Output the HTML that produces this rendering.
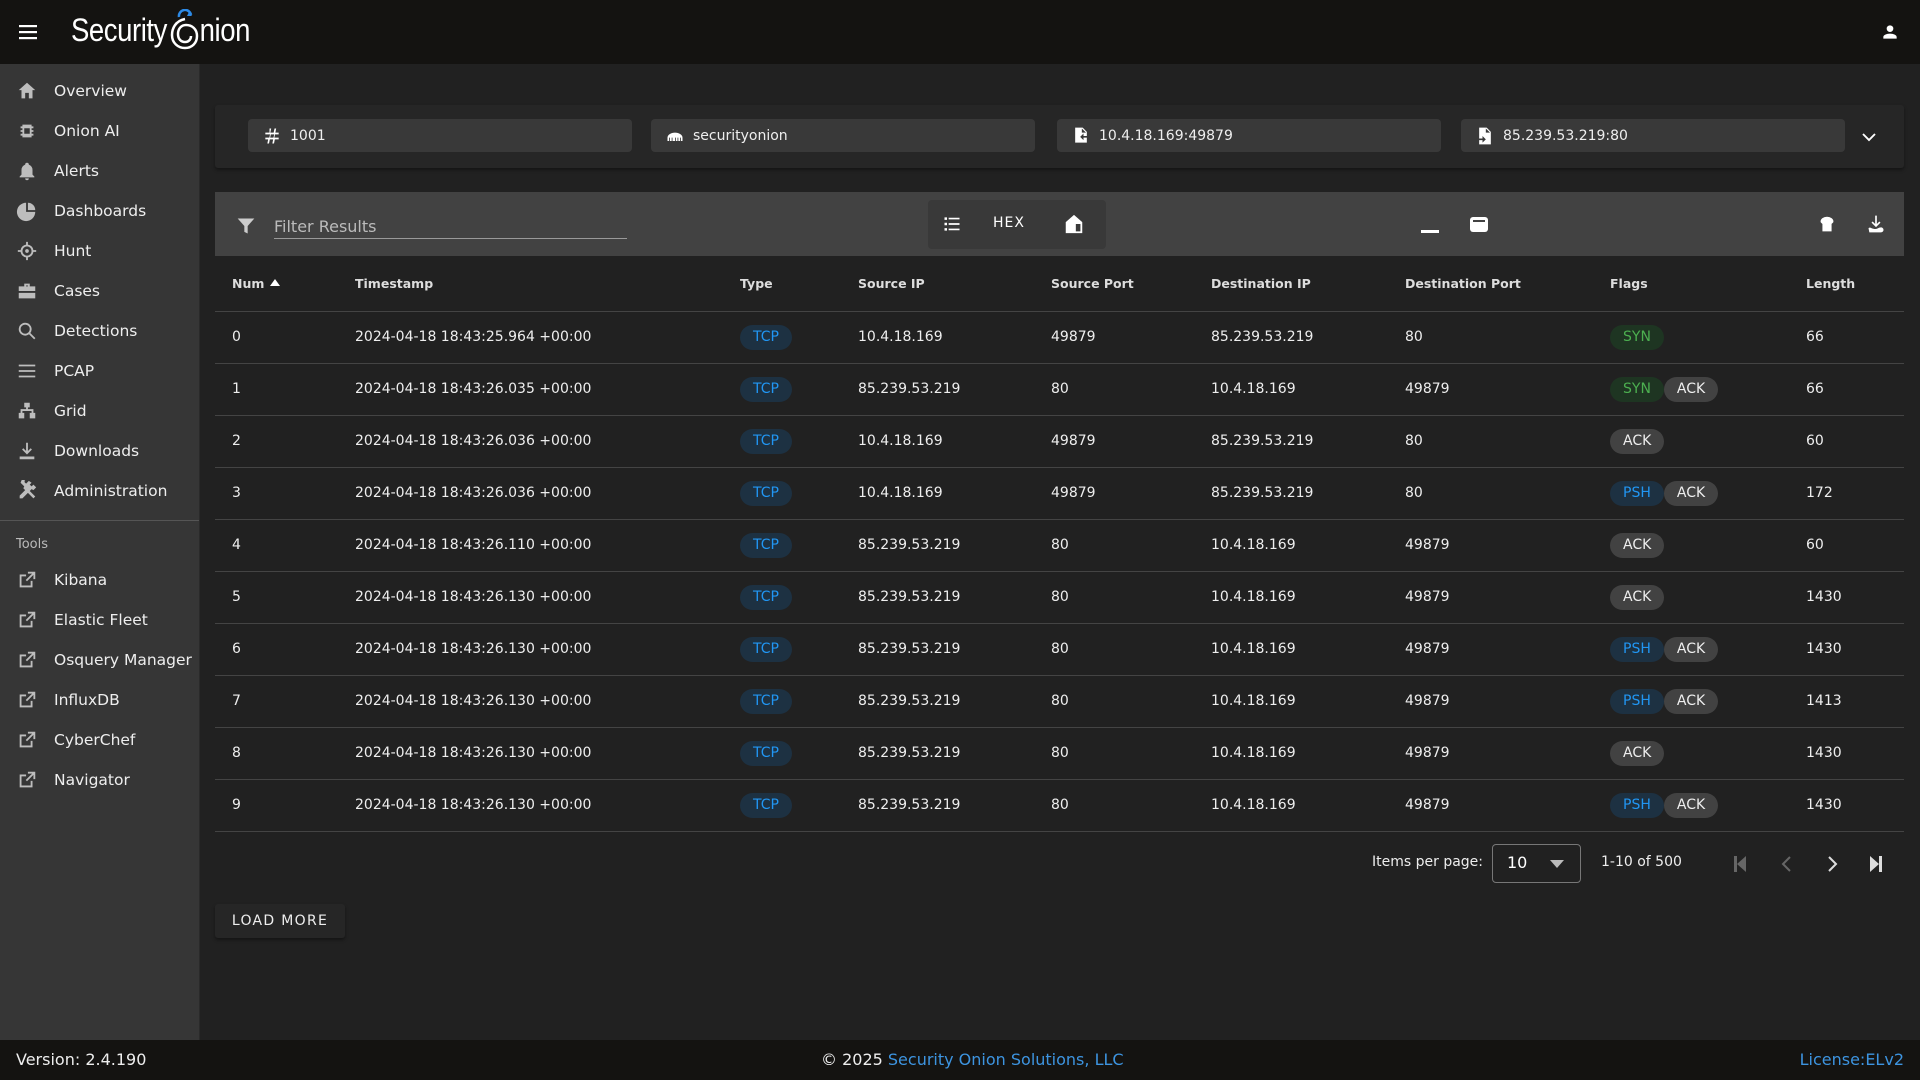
<!DOCTYPE html>
<html><head><meta charset="utf-8"><style>
*{box-sizing:border-box;margin:0;padding:0}
body{width:1920px;height:1080px;background:#212121;font-family:"DejaVu Sans","Liberation Sans",sans-serif;color:#fff;position:relative;overflow:hidden}
.abs{position:absolute}
#top{left:0;top:0;width:1920px;height:64px;background:#141311}
#side{left:0;top:64px;width:200px;height:976px;background:#363636;border-right:1px solid #2a2a2a}
.nav{position:absolute;left:0;width:200px;height:40px;font-size:15.5px;color:#eee;display:flex;align-items:center}
.nav svg{position:absolute;left:16px;width:22px;height:22px;fill:#bdbdbd}
.nav span{position:absolute;left:54px}
#foot{left:0;top:1040px;width:1920px;height:40px;background:#141311;font-size:16px;color:#eee}
.card{background:#262626;box-shadow:0 2px 3px rgba(0,0,0,.4);border-radius:3px}
.chipin{position:absolute;top:119px;height:33px;width:384px;background:#393939;border-radius:4px;font-size:14px;color:#eee;display:flex;align-items:center}
.chipin svg{position:absolute;left:14px;width:20px;height:20px;fill:#fff}
.chipin span{position:absolute;left:42px}
table{border-collapse:collapse;position:absolute;left:215px;top:256px;width:1689px;font-size:14px;table-layout:fixed}
th{height:55px;text-align:left;font-size:12.5px;font-weight:bold;color:#ddd;border-bottom:1px solid #444;padding:0}
td{height:52px;border-bottom:1px solid #444;color:#eee;padding:0}
.c{display:inline-block;height:25px;line-height:25px;padding:0 13px;border-radius:13px;font-size:14px}
.tcp{background:#1d3142;color:#2196f3}
.syn{background:#1e3522;color:#4caf50}
.ack{background:#424242;color:#eee}
.psh{background:#1d3142;color:#2196f3}
</style></head><body>
<div id="top" class="abs">
  <svg class="abs" style="left:19px;top:24px" width="18" height="16" viewBox="0 0 18 16"><rect y="1" width="18" height="2.2" fill="#fff"/><rect y="7" width="18" height="2.2" fill="#fff"/><rect y="13" width="18" height="2.2" fill="#fff"/></svg>
  <div class="abs" style="left:71px;top:12px;font-family:'Liberation Sans',sans-serif;font-size:32px;color:#fff;transform:scaleX(.86);transform-origin:left;letter-spacing:-.5px;white-space:nowrap">Security<span style="display:inline-block;width:38px"></span>nion</div>
  <svg class="abs" style="left:168px;top:9px" width="32" height="42" viewBox="0 0 30 42"><path d="M10 8 A6 6 0 0 1 22 6" stroke="#2d8ae6" stroke-width="2.5" fill="none"/><path d="M20 3 l3 4 l-5 0z" fill="#2d8ae6"/><path d="M16 10 C6 12 3 20 3 26 C3 34 9 39 16 39 C23 39 28 34 28 27 C28 20 23 16 17 16 C12 16 9 20 9 25 C9 30 12 33 16 33 C20 33 22 30 22 27" stroke="#fff" stroke-width="2.5" fill="none"/></svg>
  <svg class="abs" style="left:1880px;top:22px" width="20" height="20" viewBox="0 0 24 24"><path fill="#fff" d="M12 4a4 4 0 1 1 0 8 4 4 0 0 1 0-8zm0 10c4.4 0 8 1.8 8 4v2H4v-2c0-2.2 3.6-4 8-4z"/></svg>
</div>
<div id="side" class="abs">
  <div class="nav" style="top:7px"><svg viewBox="0 0 24 24"><path d="M12 3l9 8h-3v9h-4v-6h-4v6H6v-9H3z"/></svg><span>Overview</span></div>
  <div class="nav" style="top:47px"><svg viewBox="0 0 24 24"><path d="M7 5h10v2h2v2h-2v2h2v2h-2v2h2v2h-2v2H7v-2H5v-2h2v-2H5v-2h2V9H5V7h2zM9 9v6h6V9z"/></svg><span>Onion AI</span></div>
  <div class="nav" style="top:87px"><svg viewBox="0 0 24 24"><path d="M12 3a2 2 0 0 1 2 2 6 6 0 0 1 4 6v5l2 2v1H4v-1l2-2v-5a6 6 0 0 1 4-6 2 2 0 0 1 2-2zm-2 17h4a2 2 0 0 1-4 0z"/></svg><span>Alerts</span></div>
  <div class="nav" style="top:127px"><svg viewBox="0 0 24 24"><path d="M11 3v10h10A10 10 0 1 1 11 3zm2 0a8 8 0 0 1 8 8h-8z"/></svg><span>Dashboards</span></div>
  <div class="nav" style="top:167px"><svg viewBox="0 0 24 24"><path d="M11 2h2v3a7 7 0 0 1 6 6h3v2h-3a7 7 0 0 1-6 6v3h-2v-3a7 7 0 0 1-6-6H2v-2h3a7 7 0 0 1 6-6zm1 5a5 5 0 1 0 0 10 5 5 0 0 0 0-10zm0 3a2 2 0 1 1 0 4 2 2 0 0 1 0-4z"/></svg><span>Hunt</span></div>
  <div class="nav" style="top:207px"><svg viewBox="0 0 24 24"><path d="M9 4h6v3h6v5H3V7h6zm2 2v1h2V6zM3 14h18v6H3z"/></svg><span>Cases</span></div>
  <div class="nav" style="top:247px"><svg viewBox="0 0 24 24"><path d="M10 3a7 7 0 0 1 5.6 11.2l5.6 5.6-1.4 1.4-5.6-5.6A7 7 0 1 1 10 3zm0 2a5 5 0 1 0 0 10 5 5 0 0 0 0-10z"/></svg><span>Detections</span></div>
  <div class="nav" style="top:287px"><svg viewBox="0 0 24 24"><path d="M3 5h18v2H3zm0 6h18v2H3zm0 6h18v2H3z"/></svg><span>PCAP</span></div>
  <div class="nav" style="top:327px"><svg viewBox="0 0 24 24"><path d="M9 3h6v5h-2v2h6v4h2v6h-6v-6h2v-2H7v2h2v6H3v-6h2v-4h6V8H9z"/></svg><span>Grid</span></div>
  <div class="nav" style="top:367px"><svg viewBox="0 0 24 24"><path d="M11 3h2v9l3-3 1.4 1.4L12 15.8 6.6 10.4 8 9l3 3zM4 18h16v3H4z"/></svg><span>Downloads</span></div>
  <div class="nav" style="top:407px"><svg viewBox="0 0 24 24"><path d="M5 3l4 4-1 2 2 2-6 6v3h3l6-6 6 6 2-2-6-6 2-2 2 1 3-3-3-3-2 2-2-2 2-2-3-2-3 3-2-2 1-1-3-3z"/></svg><span>Administration</span></div>
  <div class="abs" style="left:0;top:456px;width:199px;height:1px;background:#555"></div>
  <div class="abs" style="left:16px;top:473px;font-size:13px;color:#bbb">Tools</div>
  <div class="nav" style="top:496px"><svg viewBox="0 0 24 24"><path d="M4 6h7v2H6v10h10v-5h2v7H4zm9-3h8v8h-2V6.4l-7 7L10.6 12l7-7H13z"/></svg><span>Kibana</span></div>
  <div class="nav" style="top:536px"><svg viewBox="0 0 24 24"><path d="M4 6h7v2H6v10h10v-5h2v7H4zm9-3h8v8h-2V6.4l-7 7L10.6 12l7-7H13z"/></svg><span>Elastic Fleet</span></div>
  <div class="nav" style="top:576px"><svg viewBox="0 0 24 24"><path d="M4 6h7v2H6v10h10v-5h2v7H4zm9-3h8v8h-2V6.4l-7 7L10.6 12l7-7H13z"/></svg><span>Osquery Manager</span></div>
  <div class="nav" style="top:616px"><svg viewBox="0 0 24 24"><path d="M4 6h7v2H6v10h10v-5h2v7H4zm9-3h8v8h-2V6.4l-7 7L10.6 12l7-7H13z"/></svg><span>InfluxDB</span></div>
  <div class="nav" style="top:656px"><svg viewBox="0 0 24 24"><path d="M4 6h7v2H6v10h10v-5h2v7H4zm9-3h8v8h-2V6.4l-7 7L10.6 12l7-7H13z"/></svg><span>CyberChef</span></div>
  <div class="nav" style="top:696px"><svg viewBox="0 0 24 24"><path d="M4 6h7v2H6v10h10v-5h2v7H4zm9-3h8v8h-2V6.4l-7 7L10.6 12l7-7H13z"/></svg><span>Navigator</span></div>
</div>

<div class="abs card" style="left:215px;top:105px;width:1689px;height:63px"></div>
<div class="chipin" style="left:248px"><svg viewBox="0 0 24 24"><path d="M9 3h2l-1 5h4l1-5h2l-1 5h4v2h-4.4l-.8 4H20v2h-4.6l-1 5h-2l1-5h-4l-1 5h-2l1-5H4v-2h4.8l.8-4H4V8h5zm1.6 7l-.8 4h4l.8-4z"/></svg><span>1001</span></div>
<div class="chipin" style="left:651px"><svg viewBox="0 0 24 24"><path d="M3 18v-4a9 6 0 0 1 18 0v4h-2v-4h-1v4h-2v-4h-1v4h-2v-4h-1v4H9v-4H8v4H6v-4H5v4z"/></svg><span>securityonion</span></div>
<div class="chipin" style="left:1057px"><svg viewBox="0 0 24 24"><path d="M5 2h9l5 5v5h-4v-3l-4 4 4 4v-3h4v6H5zm8 1v5h5z"/></svg><span>10.4.18.169:49879</span></div>
<div class="chipin" style="left:1461px"><svg viewBox="0 0 24 24"><path d="M5 2h9l5 5v15H5v-5h4v3l4-4-4-4v3H5zm8 1v5h5z"/></svg><span>85.239.53.219:80</span></div>
<svg class="abs" style="left:1860px;top:128px" width="18" height="18" viewBox="0 0 24 24"><path d="M4 8l8 8 8-8" stroke="#fff" stroke-width="2.5" fill="none"/></svg>

<div class="abs" style="left:215px;top:192px;width:1689px;height:64px;background:#424242"></div>
<svg class="abs" style="left:236px;top:216px" width="20" height="20" viewBox="0 0 24 24"><path fill="#ccc" d="M2 3h20l-8 9v9l-4-2v-7z"/></svg>
<div class="abs" style="left:274px;top:217px;font-size:16px;color:#bbb">Filter Results</div>
<div class="abs" style="left:274px;top:238px;width:353px;height:1px;background:#999"></div>
<div class="abs" style="left:928px;top:200px;width:178px;height:49px;background:#393939;border-radius:4px"></div>
<svg class="abs" style="left:942px;top:214px" width="20" height="20" viewBox="0 0 24 24"><path fill="#fff" d="M3 4h3v3H3zm5 .5h13v2H8zM3 10.5h3v3H3zM8 11h13v2H8zm-5 6h3v3H3zm5 .5h13v2H8z"/></svg>
<div class="abs" style="left:993px;top:215px;font-size:14px;letter-spacing:1px">HEX</div>
<svg class="abs" style="left:1063px;top:212px" width="22" height="24" viewBox="0 0 24 24"><path fill="#fff" d="M12 2l9 8v12H3V10zm2 10v8h5v-8z"/></svg>
<div class="abs" style="left:1421px;top:230px;width:18px;height:3px;background:#fff"></div>
<div class="abs" style="left:1470px;top:217px;width:18px;height:15px;background:#fff;border-radius:3px"></div>
<div class="abs" style="left:1473px;top:220px;width:12px;height:2px;background:#424242"></div>
<svg class="abs" style="left:1816px;top:214px" width="22" height="22" viewBox="0 0 24 24"><path fill="#fff" d="M5 8a7 5 0 0 1 14 0c0 2-2 2-2 3v8H7v-8c0-1-2-1-2-3z"/></svg>
<svg class="abs" style="left:1866px;top:213px" width="20" height="22" viewBox="0 0 24 24"><path fill="#fff" d="M11 2h2v10l3-3 1.4 1.4L12 15.8 6.6 10.4 8 9l3 3zM3 17c2-2 4 1 8 1 3 0 4-2 7-2a3 3 0 0 1 0 6H4z"/></svg>

<table>
<colgroup><col style="width:140px"><col style="width:385px"><col style="width:118px"><col style="width:193px"><col style="width:160px"><col style="width:194px"><col style="width:205px"><col style="width:196px"><col style="width:98px"></colgroup>
<tr><th style="padding-left:17px">Num <svg width="12" height="10" viewBox="0 0 12 10"><path d="M6 1l5 7H1z" fill="#fff"/></svg></th><th>Timestamp</th><th>Type</th><th>Source IP</th><th>Source Port</th><th>Destination IP</th><th>Destination Port</th><th>Flags</th><th>Length</th></tr>
<tr><td style="padding-left:17px">0</td><td>2024-04-18 18:43:25.964 +00:00</td><td><span class="c tcp">TCP</span></td><td>10.4.18.169</td><td>49879</td><td>85.239.53.219</td><td>80</td><td><span class="c syn">SYN</span></td><td>66</td></tr>
<tr><td style="padding-left:17px">1</td><td>2024-04-18 18:43:26.035 +00:00</td><td><span class="c tcp">TCP</span></td><td>85.239.53.219</td><td>80</td><td>10.4.18.169</td><td>49879</td><td><span class="c syn">SYN</span><span class="c ack">ACK</span></td><td>66</td></tr>
<tr><td style="padding-left:17px">2</td><td>2024-04-18 18:43:26.036 +00:00</td><td><span class="c tcp">TCP</span></td><td>10.4.18.169</td><td>49879</td><td>85.239.53.219</td><td>80</td><td><span class="c ack">ACK</span></td><td>60</td></tr>
<tr><td style="padding-left:17px">3</td><td>2024-04-18 18:43:26.036 +00:00</td><td><span class="c tcp">TCP</span></td><td>10.4.18.169</td><td>49879</td><td>85.239.53.219</td><td>80</td><td><span class="c psh">PSH</span><span class="c ack">ACK</span></td><td>172</td></tr>
<tr><td style="padding-left:17px">4</td><td>2024-04-18 18:43:26.110 +00:00</td><td><span class="c tcp">TCP</span></td><td>85.239.53.219</td><td>80</td><td>10.4.18.169</td><td>49879</td><td><span class="c ack">ACK</span></td><td>60</td></tr>
<tr><td style="padding-left:17px">5</td><td>2024-04-18 18:43:26.130 +00:00</td><td><span class="c tcp">TCP</span></td><td>85.239.53.219</td><td>80</td><td>10.4.18.169</td><td>49879</td><td><span class="c ack">ACK</span></td><td>1430</td></tr>
<tr><td style="padding-left:17px">6</td><td>2024-04-18 18:43:26.130 +00:00</td><td><span class="c tcp">TCP</span></td><td>85.239.53.219</td><td>80</td><td>10.4.18.169</td><td>49879</td><td><span class="c psh">PSH</span><span class="c ack">ACK</span></td><td>1430</td></tr>
<tr><td style="padding-left:17px">7</td><td>2024-04-18 18:43:26.130 +00:00</td><td><span class="c tcp">TCP</span></td><td>85.239.53.219</td><td>80</td><td>10.4.18.169</td><td>49879</td><td><span class="c psh">PSH</span><span class="c ack">ACK</span></td><td>1413</td></tr>
<tr><td style="padding-left:17px">8</td><td>2024-04-18 18:43:26.130 +00:00</td><td><span class="c tcp">TCP</span></td><td>85.239.53.219</td><td>80</td><td>10.4.18.169</td><td>49879</td><td><span class="c ack">ACK</span></td><td>1430</td></tr>
<tr><td style="padding-left:17px">9</td><td>2024-04-18 18:43:26.130 +00:00</td><td><span class="c tcp">TCP</span></td><td>85.239.53.219</td><td>80</td><td>10.4.18.169</td><td>49879</td><td><span class="c psh">PSH</span><span class="c ack">ACK</span></td><td>1430</td></tr>
</table>

<div class="abs" style="left:1372px;top:854px;font-size:14px;color:#eee">Items per page:</div>
<div class="abs" style="left:1492px;top:844px;width:89px;height:39px;border:1px solid #777;border-radius:4px"></div>
<div class="abs" style="left:1507px;top:853px;font-size:16px">10</div>
<svg class="abs" style="left:1550px;top:860px" width="14" height="8" viewBox="0 0 14 8"><path d="M0 0h14L7 8z" fill="#bbb"/></svg>
<div class="abs" style="left:1601px;top:854px;font-size:14px;color:#eee">1-10 of 500</div>
<svg class="abs" style="left:1732px;top:855px" width="16" height="18" viewBox="0 0 16 18"><path d="M2 1h3v16H2zm12 0v16L5 9z" fill="#666"/></svg>
<svg class="abs" style="left:1779px;top:855px" width="14" height="18" viewBox="0 0 14 18"><path d="M11 2L4 9l7 7" stroke="#666" stroke-width="2" fill="none"/></svg>
<svg class="abs" style="left:1826px;top:855px" width="14" height="18" viewBox="0 0 14 18"><path d="M3 2l7 7-7 7" stroke="#ddd" stroke-width="2" fill="none"/></svg>
<svg class="abs" style="left:1868px;top:855px" width="16" height="18" viewBox="0 0 16 18"><path d="M11 1h3v16h-3zM2 1v16l9-8z" fill="#ddd"/></svg>

<div class="abs card" style="left:215px;top:904px;width:130px;height:34px;display:flex;align-items:center;justify-content:center;font-size:14px;letter-spacing:1.3px;color:#eee">LOAD MORE</div>

<div id="foot" class="abs">
  <div class="abs" style="left:16px;top:10px">Version: 2.4.190</div>
  <div class="abs" style="left:821px;top:10px">© 2025 <span style="color:#3d94e0">Security Onion Solutions, LLC</span></div>
  <div class="abs" style="right:16px;top:10px;color:#3d94e0">License:ELv2</div>
</div>
</body></html>
